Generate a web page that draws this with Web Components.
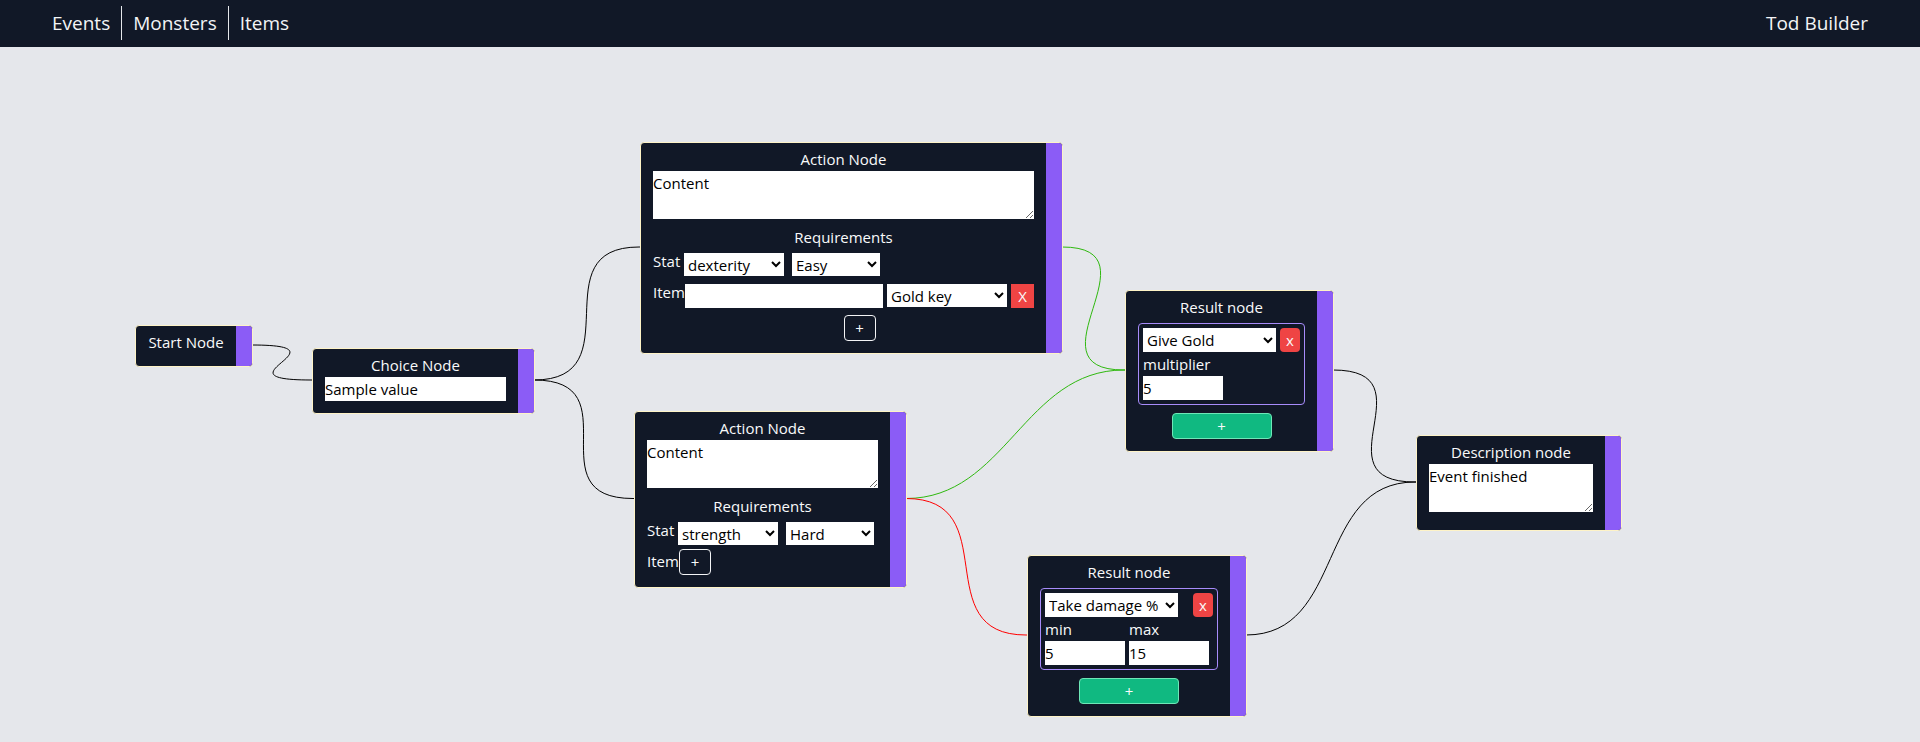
<!DOCTYPE html>
<html lang="en">
<head>
<meta charset="utf-8">
<title>Tod Builder</title>
<style>
  body { margin: 0; background: #e5e7eb; font: 15px/24px "Open Sans", "Noto Sans", sans-serif; }
</style>
</head>
<body>
<tod-app></tod-app>
<script>
const controls = `
  * { box-sizing: border-box; }
  input, select, textarea, button { font: inherit; color: inherit; margin: 0; padding: 0; border: 0; border-radius: 0; }
  input, select, textarea { background: #fff; color: #000; }
  textarea { display: block; width: 100%; height: 48px; margin-bottom: 6px; resize: both; overflow: auto; }
  button { cursor: pointer; background: none; }
`;
const define = (name, html, setup) => {
  const template = document.createElement('template');
  template.innerHTML = html;
  customElements.define(name, class extends HTMLElement {
    constructor() {
      super();
      this.attachShadow({ mode: 'open' }).append(template.content.cloneNode(true));
    }
    connectedCallback() { if (setup) setup(this, this.shadowRoot); }
  });
};

define('nav-bar', `
  <style>
    :host { display: block; background: #111827; color: #f3f4f6; font-size: 19px; line-height: 28px; }
    nav { display: flex; justify-content: space-between; align-items: center; padding: 6px 41px 7px; }
    .links { display: flex; }
    a { color: inherit; text-decoration: none; padding: 3px 11px; }
    .links a + a { border-left: 1px solid #e5e7eb; }
  </style>
  <nav>
    <div class="links"><a href="#events">Events</a><a href="#monsters">Monsters</a><a href="#items">Items</a></div>
    <a href="#home">Tod Builder</a>
  </nav>`);

define('flow-node', `
  <style>
    :host { display: flex; position: absolute; box-sizing: border-box; border: 1px solid #fef3c7; border-radius: 4px;
      background: #111827; color: #f9fafb; overflow: hidden; }
    .body { flex: 1; min-width: 0; padding: 4px 12px 12px; }
    h2 { margin: 0; font: inherit; text-align: center; white-space: nowrap; }
    .port { width: 16px; background: #8b5cf6; }
  </style>
  <div class="body"><h2></h2><slot></slot></div><div class="port"></div>`,
  (el, root) => { root.querySelector('h2').textContent = el.getAttribute('heading'); });

define('choice-form', `
  <style>${controls}
    :host { display: block; }
    input { display: block; width: 100%; height: 24px; }
  </style>
  <input aria-label="Choice" value="Sample value">`);

define('description-form', `
  <style>${controls} :host { display: block; }</style>
  <textarea aria-label="Description">Event finished</textarea>`);

define('action-form', `
  <style>${controls}
    :host { display: block; }
    h3 { margin: 0; font: inherit; text-align: center; }
    .row { display: flex; }
    .row label { width: 32px; white-space: nowrap; }
    .row select { height: 23px; margin-top: 4px; }
    .stat { padding-bottom: 4px; }
    .stat label { width: 31px; }
    .stat select { width: 88px; margin-left: 8px; }
    .stat label + select { width: 100px; margin-left: 0; }
    .items { flex: 1; min-width: 0; }
    .entry { display: flex; margin-bottom: 7px; }
    .entry input { flex: 1; min-width: 0; height: 24px; margin-top: 4px; }
    .entry select { width: 120px; margin-left: 4px; }
    .entry ~ .add { margin: 0 auto; }
    .remove { width: 23px; height: 24px; margin: 4px 0 0 4px; background: #ef4444; }
    .add { display: block; width: 32px; height: 26px; border: 1px solid #f3f4f6; border-radius: 4px; }
  </style>
  <textarea aria-label="Content">Content</textarea>
  <h3>Requirements</h3>
  <div class="row stat">
    <label for="stat">Stat</label>
    <select id="stat"><option>strength</option><option>dexterity</option></select>
    <select id="level" aria-label="Difficulty"><option>Easy</option><option>Hard</option></select>
  </div>
  <div class="row">
    <label for="item">Item</label>
    <div class="items"><button class="add" id="add" type="button" aria-label="Add item">+</button></div>
  </div>`,
  (el, root) => {
    root.querySelector('#stat').value = el.getAttribute('stat');
    root.querySelector('#level').value = el.getAttribute('level');
    if (el.hasAttribute('item')) {
      root.querySelector('.items').insertAdjacentHTML('afterbegin',
        '<div class="entry"><input id="item"><select aria-label="Item kind"><option>' + el.getAttribute('item') +
        '</option></select><button class="remove" type="button">X</button></div>');
    } else {
      root.querySelector('[for=item]').htmlFor = 'add';
    }
  });

define('result-form', `
  <style>${controls}
    :host { display: block; }
    .panel { margin-top: 4px; padding: 4px; border: 1px solid #a78bfa; border-radius: 4px; }
    .top { display: flex; justify-content: space-between; }
    select { width: 133px; height: 24px; }
    .remove { width: 20px; height: 24px; border-radius: 4px; background: #ef4444; }
    .fields { display: flex; gap: 4px; }
    .fields label { width: 80px; }
    .fields input { display: block; width: 80px; height: 24px; }
    .add { display: block; width: 100px; height: 26px; margin: 8px auto 0; border: 1px solid #6ee7b7; border-radius: 4px;
      background: #10b981; }
  </style>
  <div class="panel">
    <div class="top"><select aria-label="Result"></select><button class="remove" type="button">x</button></div>
    <div class="fields"></div>
  </div>
  <button class="add" type="button" aria-label="Add result">+</button>`,
  (el, root) => {
    root.querySelector('select').innerHTML = '<option>' + el.getAttribute('kind') + '</option>';
    root.querySelector('.fields').innerHTML = el.getAttribute('fields').split(',').map(f => {
      const [name, value] = f.split(':');
      return '<label>' + name + '<input value="' + value + '"></label>';
    }).join('');
  });

define('tod-app', `
  <style>
    :host { display: flex; flex-direction: column; min-height: 100vh; }
    main { position: relative; flex: 1; }
    svg { display: block; position: absolute; inset: 0; width: 100%; height: 100%; overflow: visible; }
    path { fill: none; stroke-width: 1; }
    .start { left: 135px; top: 278px; width: 118px; }
    .choice { left: 312px; top: 301px; width: 223px; }
    .action-a { left: 640px; top: 95px; width: 423px; }
    .action-b { left: 634px; top: 364px; width: 273px; }
    .result-a { left: 1125px; top: 243px; width: 209px; }
    .result-b { left: 1027px; top: 508px; width: 220px; }
    .description { left: 1416px; top: 388px; width: 206px; }
  </style>
  <nav-bar></nav-bar>
  <main>
    <svg aria-hidden="true"></svg>
    <flow-node class="start" heading="Start Node"></flow-node>
    <flow-node class="choice" heading="Choice Node"><choice-form></choice-form></flow-node>
    <flow-node class="action-a" heading="Action Node"><action-form stat="dexterity" level="Easy" item="Gold key"></action-form></flow-node>
    <flow-node class="action-b" heading="Action Node"><action-form stat="strength" level="Hard"></action-form></flow-node>
    <flow-node class="result-a" heading="Result node"><result-form kind="Give Gold" fields="multiplier:5"></result-form></flow-node>
    <flow-node class="result-b" heading="Result node"><result-form kind="Take damage %" fields="min:5,max:15"></result-form></flow-node>
    <flow-node class="description" heading="Description node"><description-form></description-form></flow-node>
  </main>`,
  (el, root) => {
    const edges = [
      ['start', 'choice', '#000'], ['choice', 'action-a', '#000'], ['choice', 'action-b', '#000'],
      ['action-a', 'result-a', '#2fb90f'], ['action-b', 'result-a', '#2fb90f'], ['action-b', 'result-b', '#f00'],
      ['result-a', 'description', '#000'], ['result-b', 'description', '#000']
    ];
    const svg = root.querySelector('svg');
    // Each edge leaves the right side of one node and enters the left side of the next, at mid height.
    const draw = () => {
      const origin = svg.getBoundingClientRect();
      const box = name => root.querySelector('.' + name).getBoundingClientRect();
      svg.innerHTML = edges.map(([from, to, color]) => {
        const a = box(from), b = box(to);
        const x1 = a.right - origin.left - 1, y1 = (a.top + a.bottom) / 2 - origin.top - 1;
        const x2 = b.left - origin.left - 1, y2 = (b.top + b.bottom) / 2 - origin.top - 1;
        return `<path stroke="${color}" d="M${x1} ${y1}C${x1 + 100} ${y1} ${x2 - 100} ${y2} ${x2} ${y2}h1"/>`;
      }).join('');
    };
    draw();
    const observer = new ResizeObserver(draw);
    root.querySelectorAll('flow-node').forEach(node => observer.observe(node));
  });
</script>
</body>
</html>
